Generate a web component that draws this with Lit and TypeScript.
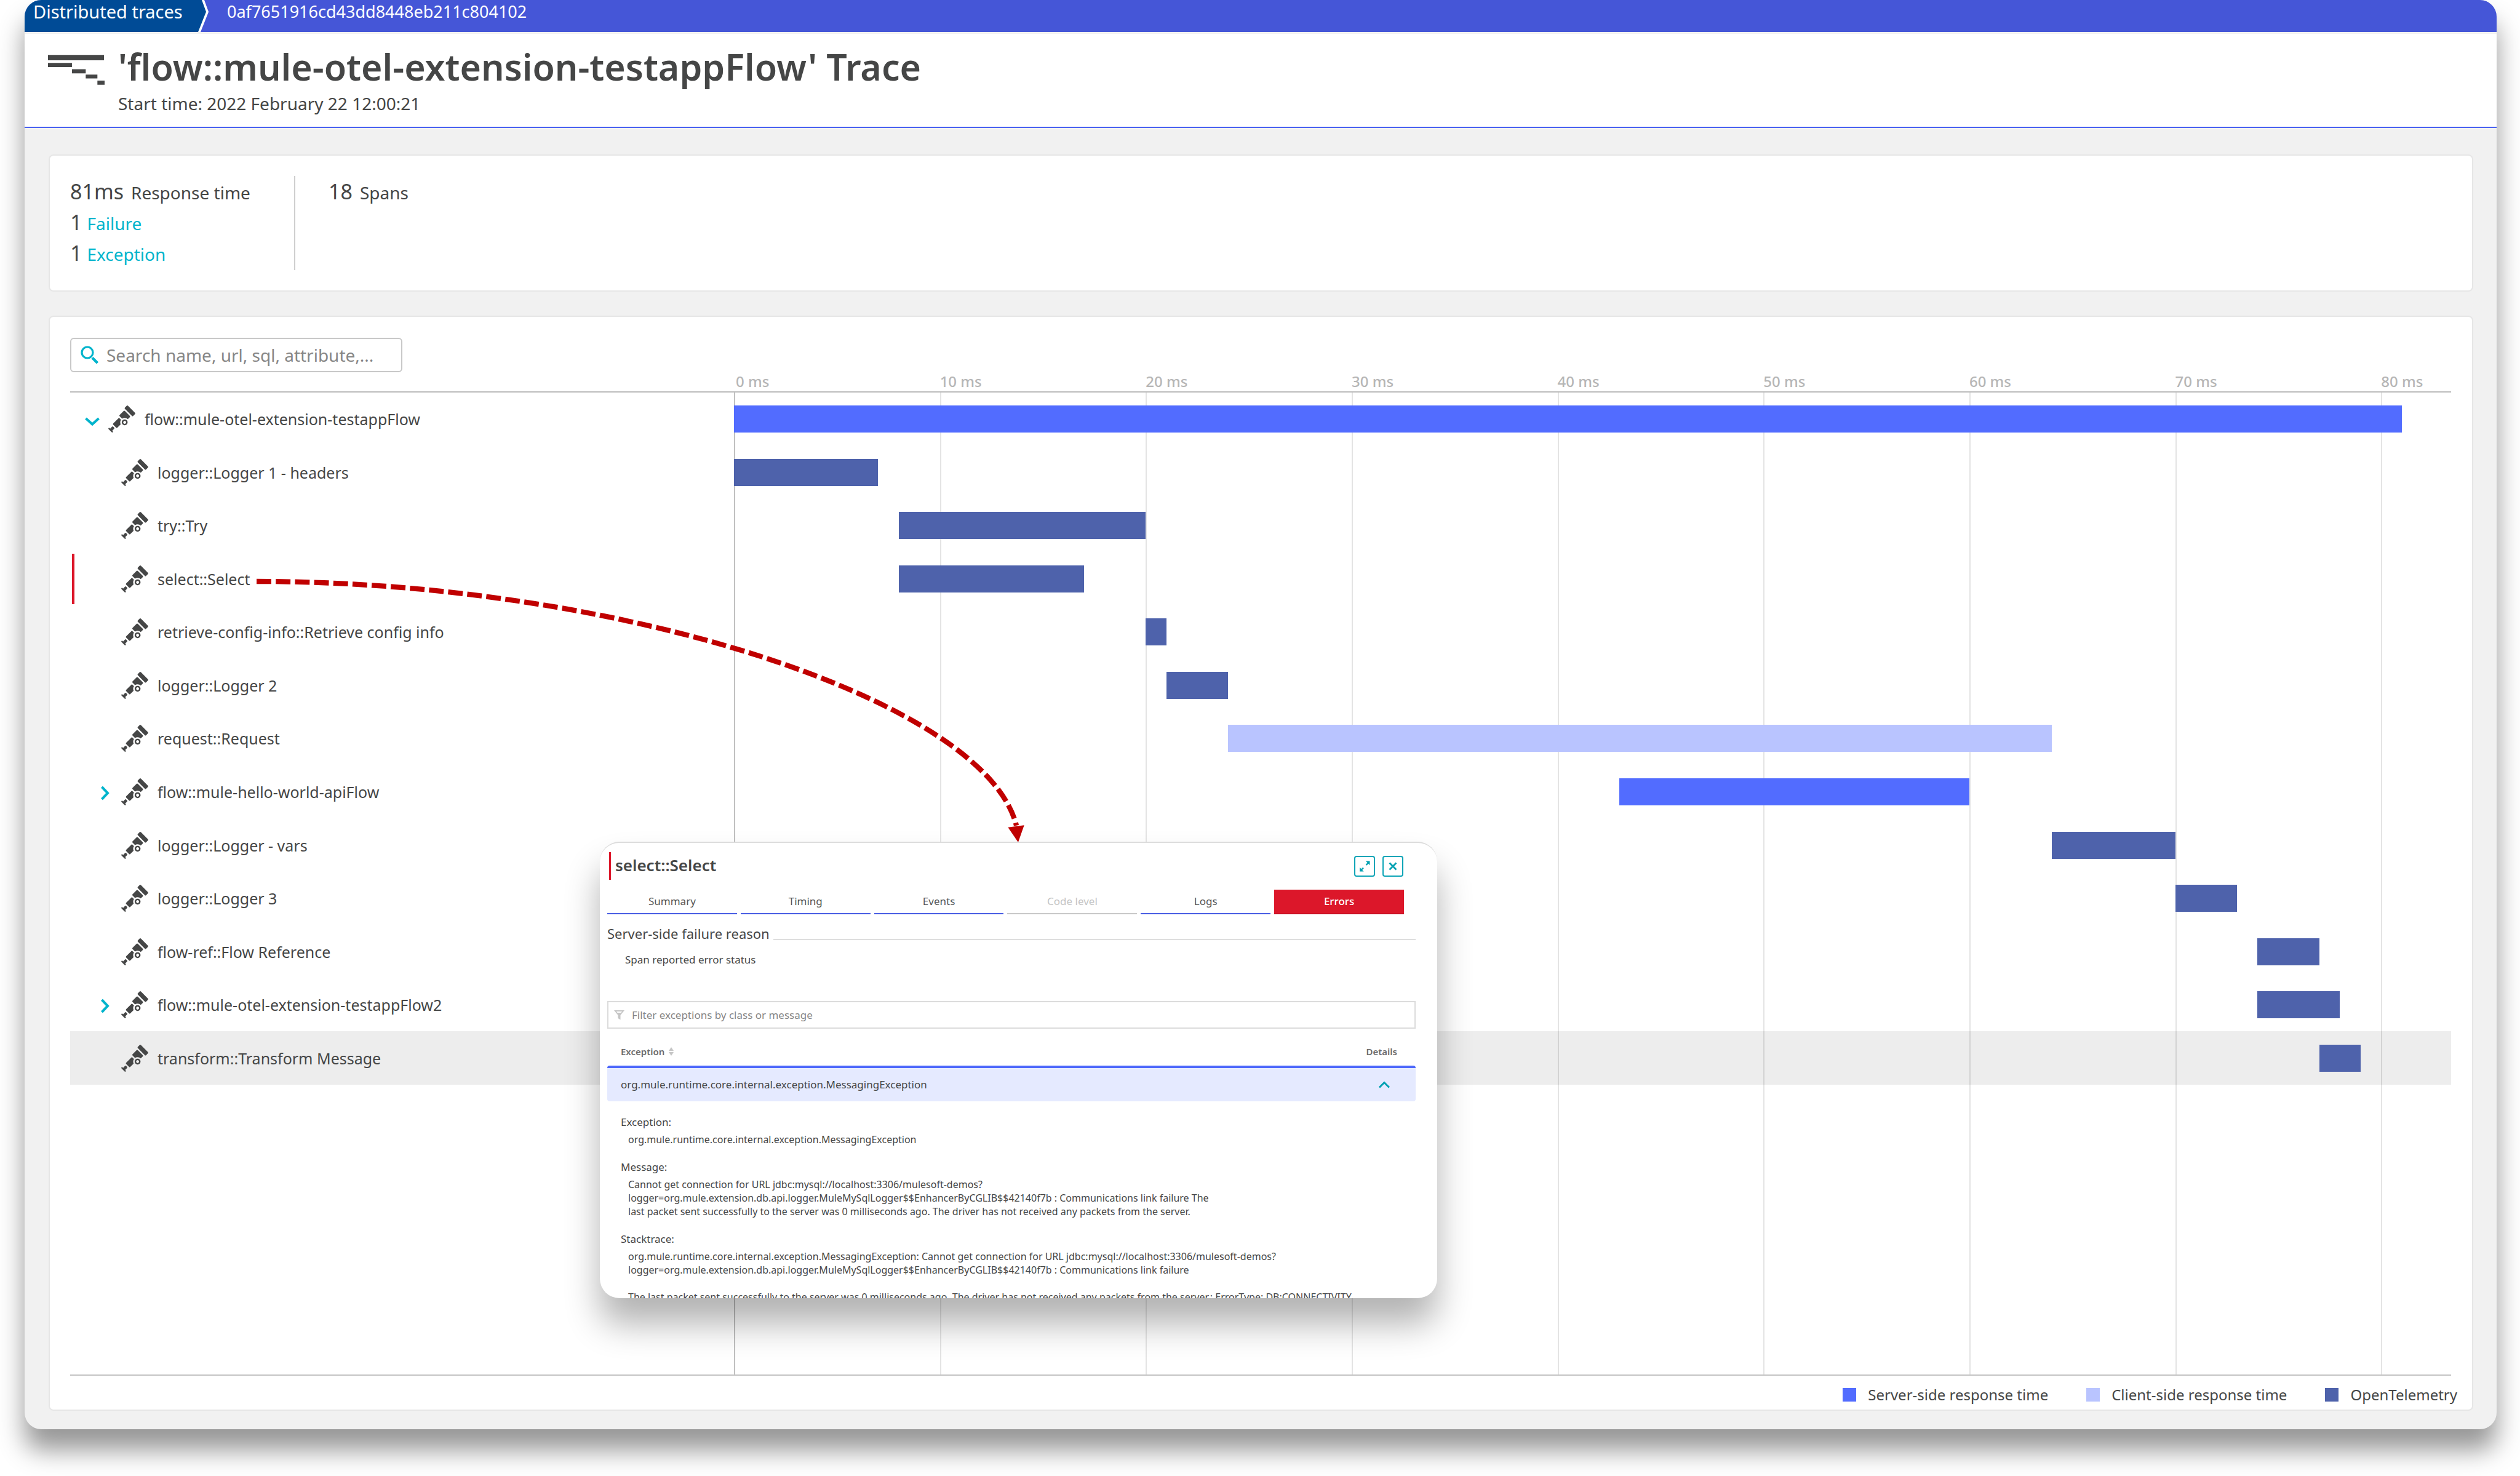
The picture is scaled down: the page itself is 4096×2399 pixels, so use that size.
import { LitElement, html, css, svg } from 'lit';
import { classMap } from 'lit/directives/class-map.js';

type SpanKind = 'server' | 'client' | 'otel';

interface Span {
  name: string;
  start: number;
  end: number;
  kind: SpanKind;
  root?: boolean;
  toggle?: 'open' | 'closed';
  failed?: boolean;
  hovered?: boolean;
}

// Length of the visible time axis, in milliseconds.
const DOMAIN_MS = 83.4;

const SPANS: Span[] = [
  { name: 'flow::mule-otel-extension-testappFlow', start: 0, end: 81, kind: 'server', root: true, toggle: 'open' },
  { name: 'logger::Logger 1 - headers', start: 0, end: 7, kind: 'otel' },
  { name: 'try::Try', start: 8, end: 20, kind: 'otel' },
  { name: 'select::Select', start: 8, end: 17, kind: 'otel', failed: true },
  { name: 'retrieve-config-info::Retrieve config info', start: 20, end: 21, kind: 'otel' },
  { name: 'logger::Logger 2', start: 21, end: 24, kind: 'otel' },
  { name: 'request::Request', start: 24, end: 64, kind: 'client' },
  { name: 'flow::mule-hello-world-apiFlow', start: 43, end: 60, kind: 'server', toggle: 'closed' },
  { name: 'logger::Logger - vars', start: 64, end: 70, kind: 'otel' },
  { name: 'logger::Logger 3', start: 70, end: 73, kind: 'otel' },
  { name: 'flow-ref::Flow Reference', start: 74, end: 77, kind: 'otel' },
  { name: 'flow::mule-otel-extension-testappFlow2', start: 74, end: 78, kind: 'otel', toggle: 'closed' },
  { name: 'transform::Transform Message', start: 77, end: 79, kind: 'otel', hovered: true },
];

const TICKS = [0, 10, 20, 30, 40, 50, 60, 70, 80];

const LEGEND: { label: string; kind: SpanKind }[] = [
  { label: 'Server-side response time', kind: 'server' },
  { label: 'Client-side response time', kind: 'client' },
  { label: 'OpenTelemetry', kind: 'otel' },
];

const telescope = html`<svg class="telescope" viewBox="2 2 124 124" aria-hidden="true">
  <path d="M67.648 69.797c-5.246 5.25-5.246 13.758 0 19.008 5.25 5.246 13.758 5.246 19.004 0 5.25-5.25 5.25-13.758 0-19.008-5.246-5.246-13.754-5.246-19.004 0zm14.207 14.219a6.649 6.649 0 0 1-9.41 0 6.65 6.65 0 0 1 0-9.407 6.649 6.649 0 0 1 9.41 0c2.598 2.586 2.598 6.809 0 9.407zM86.43 3.672l-8.235 8.234a4.17 4.17 0 0 0 0 5.875l32.149 32.149a4.17 4.17 0 0 0 5.875 0l8.234-8.235c1.61-1.61 1.61-4.261 0-5.87L92.29 3.671a4.159 4.159 0 0 0-5.86 0z" />
  <path d="M28.738 108.895a3.763 3.763 0 0 0 0-5.31l-4.183-4.187a3.768 3.768 0 0 0-5.313 0l-8.644 8.649-.016.012-2.371-2.375c-1.313-1.313-3.45-1.313-4.75 0-1.313 1.312-1.313 3.449 0 4.75l14.246 14.242a3.353 3.353 0 0 0 4.746 0c1.3-1.313 1.313-3.45 0-4.746l-2.375-2.375.016-.012z" />
  <path d="M72.297 27.313 54.004 45.605c-1.625 1.625-1.625 4.301 0 5.926L65.3 62.824c7.984-5.746 19.18-5.035 26.363 2.153l9.148-9.149c1.622-1.625 1.622-4.297 0-5.922L78.22 27.313a4.185 4.185 0 0 0-5.922 0zM60.55 67.585l-6.672-6.672c-1.563-1.562-4.125-1.562-5.684 0l-23.53 23.54a4.036 4.036 0 0 0 0 5.687l13.331 13.332a4.036 4.036 0 0 0 5.688 0l15.132-15.157c-3.199-6.609-2.625-14.593 1.735-20.73z" />
</svg>`;

const base = css`
  * {
    box-sizing: border-box;
  }
  svg {
    display: block;
    overflow: visible;
    flex: none;
  }
  h1,
  h2,
  h3,
  p,
  dl,
  dd,
  ul,
  ol {
    margin: 0;
    padding: 0;
    font-weight: 400;
  }
  ul,
  ol {
    list-style: none;
  }
  button,
  input {
    font: inherit;
    color: inherit;
    margin: 0;
    padding: 0;
    border: 0;
    background: none;
    border-radius: 0;
  }
`;

class TraceTimeline extends LitElement {
  static styles = [
    base,
    css`
      :host {
        display: flex;
        flex-direction: column;
        flex: 1;
      }
      .head,
      .row {
        display: grid;
        grid-template-columns: 1079px 1fr;
      }
      .head {
        height: 89px;
        border-bottom: 2px solid #bcbcbc;
        align-items: end;
      }
      .search {
        align-self: start;
        display: flex;
        align-items: center;
        gap: 12px;
        width: 540px;
        height: 56px;
        padding: 0 15px;
        border: 2px solid #c8c8c8;
        border-radius: 6px;
      }
      .search input {
        flex: 1;
        min-width: 0;
        height: 40px;
        font-size: 28px;
        outline: none;
      }
      .search input::placeholder {
        color: #868686;
        opacity: 1;
      }
      .ticks,
      .lines {
        display: grid;
        grid-template-columns: repeat(8, minmax(0, 10fr)) minmax(0, 3.4fr);
      }
      .tick {
        font-size: 24px;
        line-height: 32px;
        font-weight: 500;
        color: #b6b6b6;
        white-space: nowrap;
      }
      .tick:first-child {
        padding-left: 3px;
      }
      .body {
        flex: 1;
        display: grid;
        border-bottom: 2px solid #c4c4c4;
      }
      .lines,
      .rows {
        grid-area: 1 / 1;
      }
      .lines {
        margin-left: 1079px;
      }
      .line {
        border-left: 2px solid #e4e4e4;
      }
      .line:first-child {
        border-left-color: #c0c0c0;
      }
      .rows {
        display: grid;
        grid-template-rows: repeat(13, 1fr);
        height: 1125px;
      }
      .row {
        position: relative;
        align-items: center;
      }
      .row.hovered {
        background: rgba(0, 0, 0, 0.07);
      }
      .row.failed::before {
        content: '';
        position: absolute;
        left: 3px;
        top: 2px;
        bottom: 2px;
        width: 4px;
        background: #dc172a;
      }
      .name {
        display: flex;
        align-items: center;
        padding-left: 43px;
        font-size: 25px;
        line-height: 36px;
      }
      .root .name {
        padding-left: 22px;
      }
      .toggle {
        display: block;
        width: 28px;
        height: 28px;
        margin-right: 12px;
      }
      .chevron {
        width: 28px;
        height: 28px;
        fill: none;
        stroke: #00b4cc;
        stroke-width: 4;
      }
      .telescope {
        width: 44px;
        height: 44px;
        margin-right: 15px;
        fill: #454646;
      }
      .bar {
        height: 44px;
      }
      .server {
        background: #526cff;
      }
      .client {
        background: #b9c4ff;
      }
      .otel {
        background: #4e62ab;
      }
      .legend {
        display: flex;
        justify-content: flex-end;
        align-items: center;
        gap: 62px;
        height: 55px;
        padding-top: 7px;
        margin-right: -10px;
        font-size: 24px;
        line-height: 32px;
      }
      .entry {
        display: flex;
        align-items: center;
        gap: 19px;
      }
      .swatch {
        width: 22px;
        height: 22px;
      }
    `,
  ];

  private renderToggle(span: Span) {
    if (!span.toggle) return html`<span class="toggle"></span>`;
    const open = span.toggle === 'open';
    return html`<button class="toggle" aria-label=${open ? 'Collapse' : 'Expand'} aria-expanded=${open ? 'true' : 'false'}>
      <svg class="chevron" viewBox="0 0 28 28">
        ${open ? svg`<path d="M3.5 13 14 22.5 24.5 13" />` : svg`<path d="M8.5 6 18 16 8.5 26" />`}
      </svg>
    </button>`;
  }

  private renderRow(span: Span) {
    const offset = (span.start / DOMAIN_MS) * 100;
    const width = ((span.end - span.start) / DOMAIN_MS) * 100;
    return html`<li class=${classMap({ row: true, root: !!span.root, failed: !!span.failed, hovered: !!span.hovered })}>
      <div class="name">${this.renderToggle(span)}${telescope}<span>${span.name}</span></div>
      <div>
        <div class="bar ${span.kind}" style="margin-left:${offset}%;width:${width}%"></div>
      </div>
    </li>`;
  }

  render() {
    return html`
      <div class="head">
        <label class="search">
          <svg width="30" height="30" viewBox="0 0 30 30" fill="none" stroke="#00b4cc" aria-hidden="true">
            <circle cx="11" cy="11" r="9" stroke-width="3.2" />
            <path d="M19 19.5 27.5 28" stroke-width="4.5" />
          </svg>
          <input type="text" aria-label="Search spans" placeholder="Search name, url, sql, attribute,..." />
        </label>
        <div class="ticks">${TICKS.map((t) => html`<span class="tick">${t} ms</span>`)}</div>
      </div>
      <div class="body">
        <div class="lines">${TICKS.map(() => html`<span class="line"></span>`)}</div>
        <ul class="rows">
          ${SPANS.map((s) => this.renderRow(s))}
        </ul>
      </div>
      <div class="legend">
        ${LEGEND.map((l) => html`<div class="entry"><span class="swatch ${l.kind}"></span><span>${l.label}</span></div>`)}
      </div>
    `;
  }
}
customElements.define('trace-timeline', TraceTimeline);

const TABS = ['Summary', 'Timing', 'Events', 'Code level', 'Logs', 'Errors'];

const MESSAGE = `Cannot get connection for URL jdbc:mysql://localhost:3306/mulesoft-demos?
logger=org.mule.extension.db.api.logger.MuleMySqlLogger$$EnhancerByCGLIB$$42140f7b : Communications link failure The
last packet sent successfully to the server was 0 milliseconds ago. The driver has not received any packets from the server.`;

const STACKTRACE = `org.mule.runtime.core.internal.exception.MessagingException: Cannot get connection for URL jdbc:mysql://localhost:3306/mulesoft-demos?
logger=org.mule.extension.db.api.logger.MuleMySqlLogger$$EnhancerByCGLIB$$42140f7b : Communications link failure

The last packet sent successfully to the server was 0 milliseconds ago. The driver has not received any packets from the server.: ErrorType: DB:CONNECTIVITY`;

class SpanDetails extends LitElement {
  static styles = [
    base,
    css`
      :host {
        display: block;
        overflow: hidden;
        background: #fff;
        border-top: 2px solid #dcdcdc;
        border-radius: 32px;
        padding: 15px 35px 0 12px;
        font-size: 17px;
        line-height: 22px;
      }
      .top {
        display: flex;
        align-items: center;
        gap: 12px;
        height: 45px;
        margin: 0 20px 16px 3px;
      }
      .title {
        flex: 1;
        height: 45px;
        padding-left: 7px;
        border-left: 3px solid #dc172a;
        font-size: 26px;
        line-height: 42px;
        font-weight: 600;
      }
      .icon-button {
        display: block;
        width: 34px;
        height: 34px;
        border: 2px solid #0ea5b7;
        border-radius: 4px;
        color: #00a1b2;
      }
      .tabs {
        display: grid;
        grid-template-columns: repeat(6, 1fr);
        gap: 6px;
        margin-right: 19px;
      }
      .tab {
        height: 40px;
        border-bottom: 2px solid #4a5ee4;
        text-align: center;
        color: #565656;
      }
      .tab:disabled {
        color: #c4c4c4;
        border-bottom-color: #c8c8c8;
      }
      .tab.active {
        background: #dc172a;
        border-bottom-color: #cb1024;
        color: #fff;
        font-weight: 500;
      }
      .section {
        display: flex;
        align-items: flex-end;
        gap: 6px;
        margin-top: 15px;
        font-size: 22px;
        line-height: 32px;
      }
      .section::after {
        content: '';
        flex: 1;
        height: 2px;
        margin-bottom: 5px;
        background: #dedede;
      }
      .reason {
        margin: 16px 0 56px 29px;
      }
      .filter {
        display: flex;
        align-items: center;
        gap: 12px;
        height: 45px;
        padding: 0 9px;
        border: 2px solid #dcdcdc;
      }
      .filter input {
        flex: 1;
        min-width: 0;
        outline: none;
      }
      .filter input::placeholder {
        color: #868686;
        opacity: 1;
      }
      table {
        width: 100%;
        border-collapse: separate;
        border-spacing: 0;
      }
      th,
      td {
        padding: 0 22px;
        text-align: left;
      }
      th {
        height: 60px;
        padding-top: 13px;
        font-size: 15px;
        font-weight: 600;
        color: #6b6b6b;
      }
      .sortable {
        display: flex;
        align-items: center;
        gap: 7px;
      }
      th:last-child {
        text-align: right;
        padding-right: 30px;
      }
      .exception td {
        height: 58px;
        background: #e5eaff;
        border-top: 4px solid #4d68fb;
      }
      .exception td:first-child {
        border-radius: 4px 0 0 4px;
      }
      .exception td:last-child {
        border-radius: 0 4px 4px 0;
        padding-right: 41px;
      }
      .collapse {
        display: block;
        margin-left: auto;
      }
      dl {
        padding-top: 22px;
      }
      dt {
        line-height: 24px;
        padding-bottom: 5px;
      }
      dd {
        margin: 0 0 22px 12px;
        font-size: 16px;
        white-space: pre;
      }
    `,
  ];

  render() {
    return html`
      <div class="top">
        <h2 class="title">select::Select</h2>
        <button class="icon-button" aria-label="Enlarge">
          <svg width="30" height="30" viewBox="2 2 30 30" fill="none" stroke="currentColor" stroke-width="2.4">
            <path d="M19.5 15 24 10.5M15 19.5 10.5 24" />
            <path d="M18.8 8.5H25.5V15.2ZM9 18.8V25.5H15.7Z" fill="currentColor" stroke="none" />
          </svg>
        </button>
        <button class="icon-button" aria-label="Close">
          <svg width="30" height="30" viewBox="2 2 30 30" fill="none" stroke="currentColor" stroke-width="2.8">
            <path d="M11.5 11.5 22.5 22.5M22.5 11.5 11.5 22.5" />
          </svg>
        </button>
      </div>
      <nav class="tabs">
        ${TABS.map(
          (t) => html`<button class=${classMap({ tab: true, active: t === 'Errors' })} ?disabled=${t === 'Code level'}>${t}</button>`,
        )}
      </nav>
      <h3 class="section">Server-side failure reason</h3>
      <p class="reason">Span reported error status</p>
      <label class="filter">
        <svg width="17" height="16" viewBox="0 0 17 16" aria-hidden="true">
          <path fill="#c6c6c6" fill-rule="evenodd" d="M0 0H17L10.5 8V15.5L6.5 13V8ZM4 2 5.5 4H11.5L13 2Z" />
        </svg>
        <input type="text" aria-label="Filter exceptions" placeholder="Filter exceptions by class or message" />
      </label>
      <table>
        <thead>
          <tr>
            <th>
              <span class="sortable">Exception
                <svg width="8" height="14" viewBox="0 0 8 14" fill="#c6c6c6" aria-hidden="true">
                  <path d="M0 6 4 0 8 6ZM0 8H8L4 14Z" />
                </svg>
              </span>
            </th>
            <th>Details</th>
          </tr>
        </thead>
        <tbody>
          <tr class="exception">
            <td>org.mule.runtime.core.internal.exception.MessagingException</td>
            <td>
              <button class="collapse" aria-label="Hide details">
                <svg width="20" height="12" viewBox="0 0 20 12" fill="none" stroke="#00a1b2" stroke-width="3">
                  <path d="M2 10.5 10 2.5 18 10.5" />
                </svg>
              </button>
            </td>
          </tr>
          <tr>
            <td colspan="2">
              <dl>
                <dt>Exception:</dt>
                <dd>org.mule.runtime.core.internal.exception.MessagingException</dd>
                <dt>Message:</dt>
                <dd>${MESSAGE}</dd>
                <dt>Stacktrace:</dt>
                <dd>${STACKTRACE}</dd>
              </dl>
            </td>
          </tr>
        </tbody>
      </table>
    `;
  }
}
customElements.define('span-details', SpanDetails);

class AppRoot extends LitElement {
  static styles = [
    base,
    css`
      :host {
        display: flex;
        flex-direction: column;
        box-sizing: border-box;
        min-height: 100vh;
        padding: 0 38px 76px 40px;
        overflow: hidden;
        background: #fff;
        color: #454646;
        font-family: 'Noto Sans', 'Liberation Sans', sans-serif;
      }
      .window {
        position: relative;
        flex: 1;
        display: flex;
        flex-direction: column;
        border-radius: 27px;
        background: #f1f1f1;
        box-shadow: 0 34px 42px rgba(0, 0, 0, 0.41);
      }
      .crumbs {
        display: flex;
        height: 52px;
        border-radius: 27px 27px 0 0;
        overflow: hidden;
        background: #4556d7;
        color: #fff;
        font-size: 27px;
        line-height: 38px;
      }
      .crumb-edge,
      .crumb {
        clip-path: polygon(0 0, calc(100% - 7px) 0, 100% 37%, calc(100% - 13px) 100%, 0 100%);
      }
      .crumb-edge {
        background: #fff;
        padding-right: 4px;
        margin-right: 30px;
      }
      .crumb {
        display: block;
        width: 295px;
        height: 52px;
        padding-left: 14px;
        background: #004b96;
        color: inherit;
        font-size: 29px;
        text-decoration: none;
        white-space: nowrap;
      }
      .header {
        display: flex;
        gap: 22px;
        height: 155px;
        margin-top: 1px;
        padding: 13px 38px 0;
        border-top: 2px solid #f1f1f1;
        border-bottom: 2px solid #4861f0;
        background: #fff;
      }
      .header svg {
        margin-top: 21px;
        fill: #454646;
      }
      .heading {
        font-size: 59px;
        line-height: 80px;
        font-weight: 600;
      }
      .started {
        font-size: 28px;
        line-height: 40px;
      }
      .content {
        flex: 1;
        display: flex;
        flex-direction: column;
        gap: 39px;
        padding: 43px 38px 30px 39px;
      }
      .card {
        border: 2px solid #e6e6e6;
        border-radius: 8px;
        background: #fff;
        padding: 33px;
      }
      .stats {
        display: flex;
        gap: 54px;
        font-size: 28px;
        line-height: 50px;
      }
      .stats ul {
        height: 153px;
      }
      .stats ul:first-child {
        width: 366px;
        border-right: 2px solid #cfcfcf;
      }
      .stats li {
        display: flex;
        gap: 12px;
        align-items: baseline;
        height: 50px;
      }
      .stats li.issue {
        gap: 8px;
      }
      .value {
        font-size: 34px;
      }
      .stats a {
        color: #00b4cc;
        text-decoration: none;
      }
      .traces {
        flex: 1;
        display: flex;
        padding: 34px 34px 0 33px;
      }
      .popup {
        position: absolute;
        left: 935px;
        top: 1368px;
        width: 1361px;
        height: 742px;
        box-shadow: 0 42px 56px rgba(0, 0, 0, 0.3);
      }
      .pointer {
        position: absolute;
        left: 377px;
        top: 945px;
        width: 1238px;
        height: 424px;
        pointer-events: none;
      }
    `,
  ];

  render() {
    return html`
      <main class="window">
        <nav class="crumbs">
          <span class="crumb-edge"><a class="crumb" href="#traces">Distributed traces</a></span>
          <span>0af7651916cd43dd8448eb211c804102</span>
        </nav>
        <header class="header">
          <svg width="92" height="49" viewBox="0 0 94.5 50" aria-hidden="true">
            <path d="M0 0H93.5V9H0ZM0 13.5H40V20.5H0ZM40 24H63V31H40ZM63 33H82.5V39.5H63ZM82.5 43H94.5V50H82.5Z" />
          </svg>
          <div>
            <h1 class="heading">'flow::mule-otel-extension-testappFlow' Trace</h1>
            <p class="started">Start time: 2022 February 22 12:00:21</p>
          </div>
        </header>
        <div class="content">
          <section class="card stats">
            <ul>
              <li><span class="value">81ms</span><span>Response time</span></li>
              <li class="issue"><span class="value">1</span><a href="#failure">Failure</a></li>
              <li class="issue"><span class="value">1</span><a href="#exception">Exception</a></li>
            </ul>
            <ul>
              <li><span class="value">18</span><span>Spans</span></li>
            </ul>
          </section>
          <section class="card traces"><trace-timeline></trace-timeline></section>
        </div>
        <svg class="pointer" viewBox="0 0 1270 435" aria-hidden="true">
          <path d="M0 0C608 0 1215 199 1267 407" fill="none" stroke="#c00000" stroke-width="8.5" stroke-dasharray="24.5 7.5" />
          <path d="M1253 410 1280 406.5 1270 435Z" fill="#c00000" />
        </svg>
        <span-details class="popup"></span-details>
      </main>
    `;
  }
}
customElements.define('app-root', AppRoot);
